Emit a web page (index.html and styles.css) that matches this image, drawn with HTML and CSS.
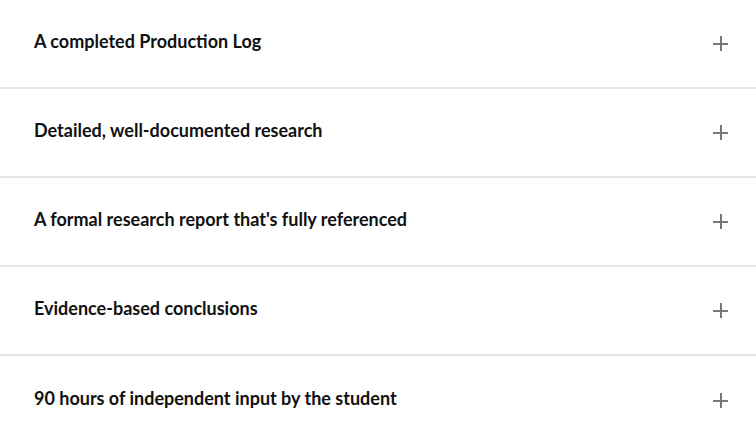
FILE: index.html
```html
<!DOCTYPE html>
<html>
<head>
<meta charset="utf-8">
<link rel="stylesheet" href="styles.css">
</head>
<body>
<div class="accordion">
  <div class="item"><span class="title">A completed Production Log</span><span class="plus"></span></div>
  <div class="item"><span class="title">Detailed, well-documented research</span><span class="plus"></span></div>
  <div class="item"><span class="title">A formal research report that's fully referenced</span><span class="plus"></span></div>
  <div class="item"><span class="title">Evidence-based conclusions</span><span class="plus"></span></div>
  <div class="item"><span class="title">90 hours of independent input by the student</span><span class="plus"></span></div>
</div>
</body>
</html>
```
FILE: styles.css
```css
html, body {
  margin: 0;
  padding: 0;
  background: #fff;
}
.accordion {
  display: flex;
  flex-direction: column;
}
.item {
  box-sizing: border-box;
  height: 89px;
  display: flex;
  align-items: center;
  justify-content: space-between;
  padding: 0 28px 0 34px;
  border-bottom: 2px solid #e6e6e6;
}
.item:last-child {
  border-bottom: none;
}
.title {
  font-family: Lato, "Liberation Sans", sans-serif;
  font-weight: 700;
  font-size: 18px;
  color: #111;
  margin-top: -6px;
}
.plus {
  position: relative;
  width: 15px;
  height: 15px;
  margin-top: -1px;
}
.plus::before, .plus::after {
  content: "";
  position: absolute;
  background: #777;
}
.plus::before {
  left: 0;
  right: 0;
  top: 7px;
  height: 2px;
}
.plus::after {
  top: 0;
  bottom: 0;
  left: 7px;
  width: 2px;
}
```
